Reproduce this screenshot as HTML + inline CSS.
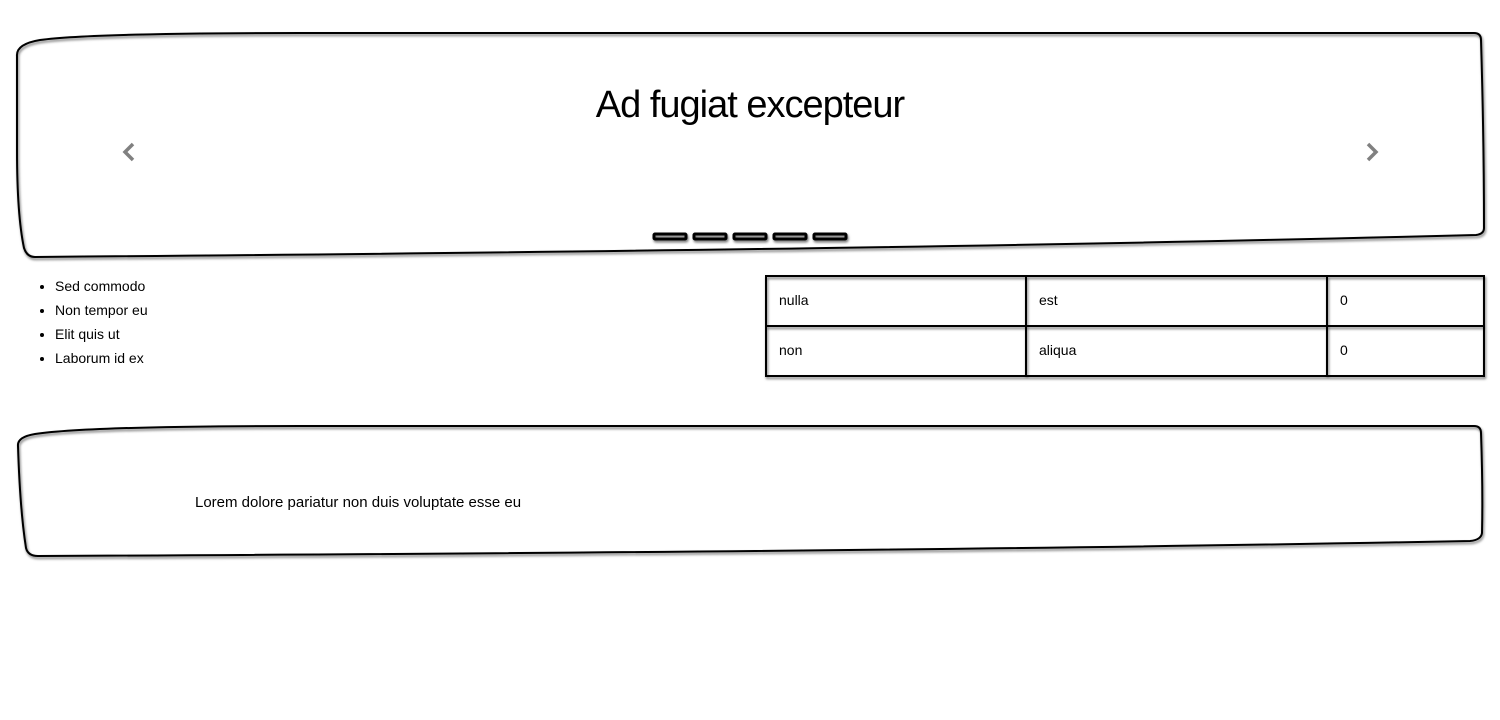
<!DOCTYPE html>
<html><head><meta charset="utf-8"><style>
html,body{margin:0;padding:0;width:1500px;height:720px;background:#fff;overflow:hidden;font-family:"Liberation Sans",sans-serif;color:#000}
svg{position:absolute;left:0;top:0}
.t{position:absolute;white-space:nowrap}
ul{position:absolute;left:35px;top:274px;margin:0;padding-left:20px;font-size:14px;line-height:24px}
</style></head><body>
<svg width="1500" height="720">
<defs><filter id="s" x="-5%" y="-20%" width="110%" height="140%"><feDropShadow dx="1" dy="2" stdDeviation="1.2" flood-color="#000" flood-opacity="0.55"/></filter></defs>
<g fill="none" stroke="#000" stroke-width="2" filter="url(#s)">
<path d="M17,56 Q16,44 40,40 Q90,33 300,33 L1474,33 Q1481,33 1481,40 Q1484,140 1484,228 Q1484,234 1476,235 Q900,250 35,257 Q27,257 24,248 Q17,215 17,150 Z"/>
<path d="M18,446 Q17,437 35,434 Q90,426 300,426 L1474,426 Q1481,426 1481,433 Q1483,490 1482,533 Q1481,540 1470,541 Q900,552 38,556 Q28,556 26,548 Q20,510 18,446 Z"/>
<rect x="766" y="276" width="718" height="100"/>
<line x1="766" y1="326" x2="1484" y2="326"/>
<line x1="1026" y1="276" x2="1026" y2="376"/>
<line x1="1327" y1="276" x2="1327" y2="376"/>
<g stroke-width="3"><rect x="654" y="234" width="32" height="5" rx="1"/><rect x="694" y="234" width="32" height="5" rx="1"/><rect x="734" y="234" width="32" height="5" rx="1"/><rect x="774" y="234" width="32" height="5" rx="1"/><rect x="814" y="234" width="32" height="5" rx="1"/></g>
</g>
<g fill="none" stroke="#808080" stroke-width="3.5"><path d="M133,144 L125,152 L133,160"/><path d="M1368,144 L1376,152 L1368,160"/></g>
</svg>
<div class="t" style="left:0;width:1500px;text-align:center;top:84px;font-size:38px;letter-spacing:-1px">Ad fugiat excepteur</div>
<ul><li>Sed commodo</li><li>Non tempor eu</li><li>Elit quis ut</li><li>Laborum id ex</li></ul>
<div class="t" style="left:779px;top:292px;font-size:14px">nulla</div>
<div class="t" style="left:1039px;top:292px;font-size:14px">est</div>
<div class="t" style="left:1340px;top:292px;font-size:14px">0</div>
<div class="t" style="left:779px;top:342px;font-size:14px">non</div>
<div class="t" style="left:1039px;top:342px;font-size:14px">aliqua</div>
<div class="t" style="left:1340px;top:342px;font-size:14px">0</div>
<div class="t" style="left:195px;top:494px;font-size:15px">Lorem dolore pariatur non duis voluptate esse eu</div>
</body></html>
